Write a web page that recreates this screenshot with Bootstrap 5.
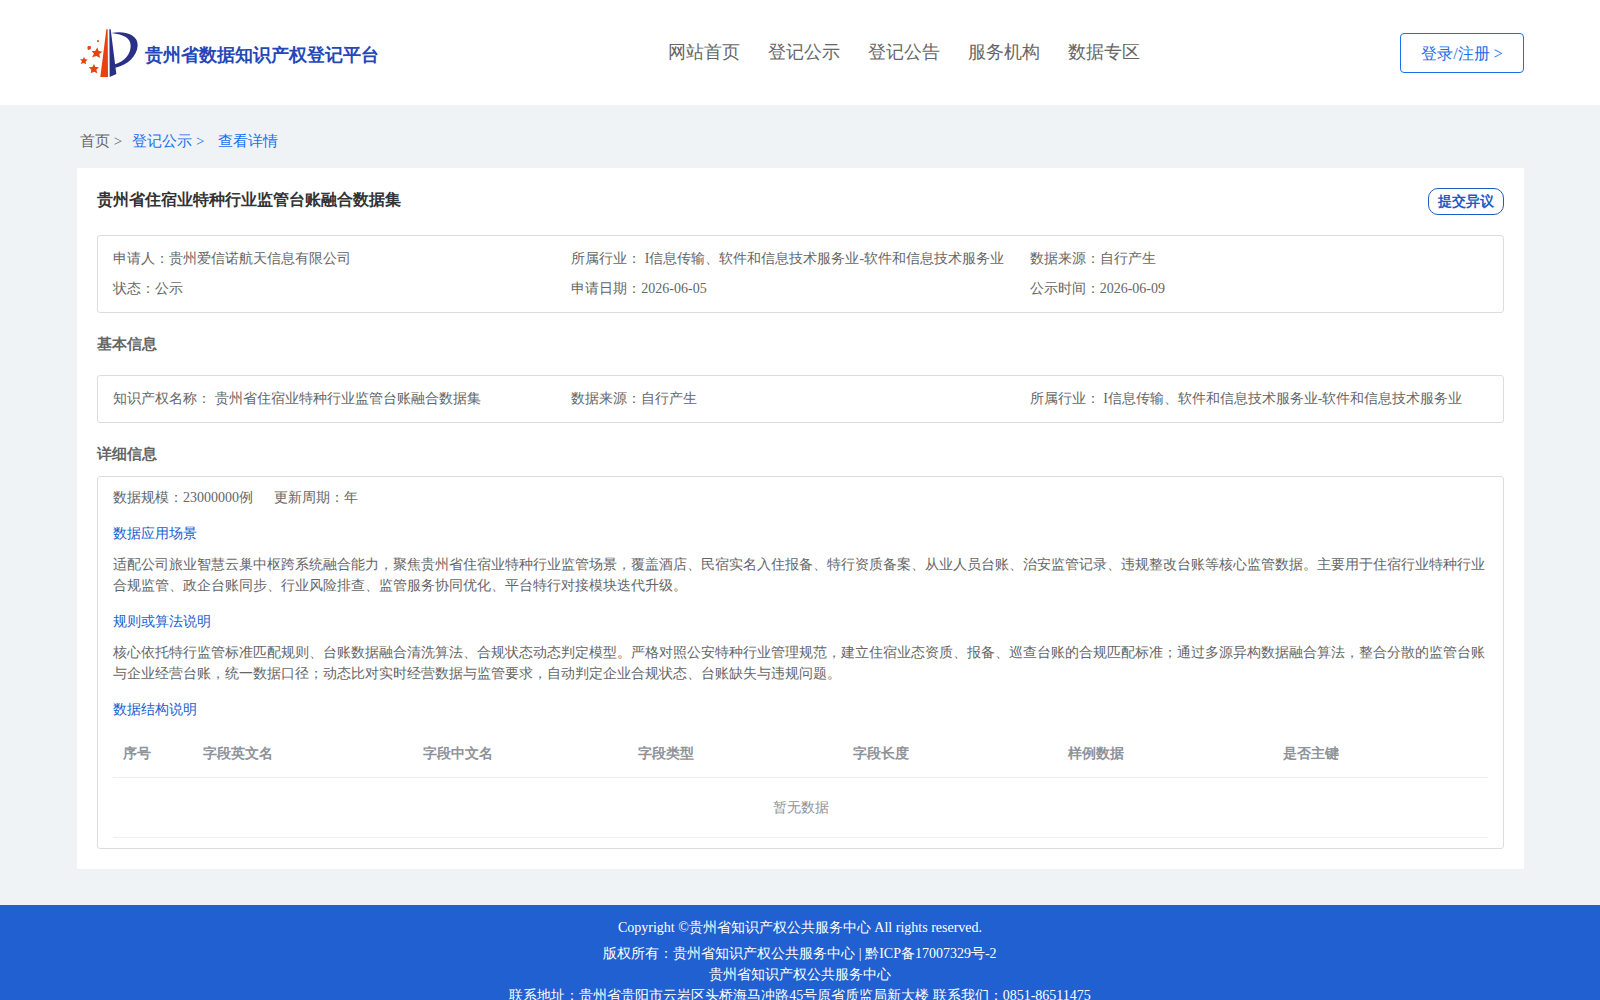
<!DOCTYPE html>
<html lang="en">
<head>
<meta charset="utf-8">
<meta name="viewport" content="width=device-width, initial-scale=1">
<title>贵州省数据知识产权登记平台</title>
<link href="https://cdn.jsdelivr.net/npm/bootstrap@5.3.0/dist/css/bootstrap.min.css" rel="stylesheet">
<style>
  body { font-family: "Liberation Serif", serif; font-size: 14px; line-height: 21px; color: #666; background: #eff3f6; }
  a { text-decoration: none; }
  .page-wrap { padding-left: 77px; padding-right: 76px; }
  .site-header { min-height: 105px; }
  .brand-link { color: #2547b8; font-size: 18px; line-height: 24px; font-weight: 700; padding-left: 3px; gap: 7px; }
  .brand-link svg { width: 58px; height: 50px; }
  .brand-link span { padding-top: 5px; }
  .main-menu { gap: 28px; padding-left: 28px; padding-bottom: 2px; font-size: 18px; line-height: 24px; }
  .main-menu a { color: #666; }
  .login-btn { width: 124px; height: 40px; padding: 2px 0 0; font-size: 16px; color: #1a6fee; border: 1px solid #1a6fee; border-radius: 4px; }
  .crumbs { padding: 25px 3px 16px; font-size: 15px; line-height: 22px; gap: 10px; }
  .crumbs a { color: #666; }
  .crumbs a.on { color: #1a6fee; }
  .panel { padding: 20px; }
  .panel-title { font-size: 16px; line-height: 24px; font-weight: 700; color: #333; }
  .object-btn { width: 76px; height: 27px; padding: 0; font-size: 14px; line-height: 21px; font-weight: 700; color: #1f5bc4; border: 1px solid #1f5bc4; border-radius: 10px; }
  .info-box { border: 1px solid #ddd; border-radius: 3px; padding: 8px 15px; }
  .info-box .cell { line-height: 30px; }
  .sec-title { font-size: 15px; line-height: 22px; font-weight: 700; color: #666; margin: 20px 0; }
  .sec-title.tight { margin-bottom: 11px; }
  .detail-box { padding: 10px 15px; }
  .scale-line { gap: 21px; }
  .sub-title { font-size: 14px; line-height: 21px; font-weight: 400; color: #2060d0; margin: 15px 0 10px; }
  .field-table { table-layout: fixed; width: 100%; color: #909399; }
  .field-table th { padding: 12px 10px; line-height: 23px; border-bottom: 1px solid #ebeef5; }
  .field-table td { height: 60px; text-align: center; border-bottom: 1px solid #ebeef5; }
  .c-no { width: 80px; } .c-en { width: 220px; }
  .site-footer { margin-top: 36px; padding: 12px 0 20px; background: #2060d0; color: #fff; }
  .site-footer a { color: #fff; }
  .copy-line { margin-bottom: 5px; }
</style>
<script src="https://cdn.jsdelivr.net/npm/bootstrap@5.3.0/dist/js/bootstrap.bundle.min.js"></script>
</head>
<body>
<header class="site-header page-wrap bg-white d-flex align-items-center justify-content-between">
  <a class="brand-link d-flex align-items-center" href="#">
    <svg viewBox="0 0 174 150" aria-hidden="true">
      <path fill="#e8420f" d="M79 4h4l1 143H61z"/>
      <path fill="#2b3087" d="M88 4h4l17 134-20 9zM94 15c46-8 80 8 79 37-1 32-30 59-66 67l-2-10c28-9 47-30 47-56 0-22-20-34-58-38z"/>
      <g fill="#e8420f">
        <path d="M52 58l4 11 11 2-9 7 2 12-10-6-14 4 6-11-7-8 11 0z"/>
        <path d="M42 108l4 9 11 1-8 7 3 11-10-5-10 5 2-11-8-7 11-1z"/>
        <path d="M12 86l3 7 8 2-6 5 1 9-7-4-9 3 4-8-6-6 9 0z"/>
        <path d="M24 54l9 1-1 9-8 2-2-7z"/><path d="M51 37l5-1 1 5-5 2z"/>
      </g>
    </svg>
    <span>贵州省数据知识产权登记平台</span>
  </a>
  <nav class="main-menu d-flex">
    <a href="#">网站首页</a><a href="#">登记公示</a><a href="#">登记公告</a><a href="#">服务机构</a><a href="#">数据专区</a>
  </nav>
  <button class="btn login-btn" type="button">登录/注册 &gt;</button>
</header>
<main class="page-wrap">
  <nav class="crumbs d-flex" aria-label="面包屑">
    <a href="#">首页 &gt;</a><a class="on" href="#">登记公示 &gt;</a><a class="on" href="#">&nbsp;查看详情</a>
  </nav>
  <section class="panel bg-white">
    <div class="d-flex justify-content-between align-items-start mb-3 pb-1">
      <h1 class="panel-title m-0">贵州省住宿业特种行业监管台账融合数据集</h1>
      <button class="btn object-btn" type="button">提交异议</button>
    </div>
    <div class="info-box">
      <div class="row g-0">
        <div class="col-4 cell">申请人：贵州爱信诺航天信息有限公司</div>
        <div class="col-4 cell">所属行业： I信息传输、软件和信息技术服务业-软件和信息技术服务业</div>
        <div class="col-4 cell">数据来源：自行产生</div>
        <div class="col-4 cell">状态：公示</div>
        <div class="col-4 cell">申请日期：2026-06-05</div>
        <div class="col-4 cell">公示时间：2026-06-09</div>
      </div>
    </div>
    <h2 class="sec-title">基本信息</h2>
    <div class="info-box">
      <div class="row g-0">
        <div class="col-4 cell">知识产权名称： 贵州省住宿业特种行业监管台账融合数据集</div>
        <div class="col-4 cell">数据来源：自行产生</div>
        <div class="col-4 cell">所属行业： I信息传输、软件和信息技术服务业-软件和信息技术服务业</div>
      </div>
    </div>
    <h2 class="sec-title tight">详细信息</h2>
    <div class="info-box detail-box">
      <div class="scale-line d-flex"><span>数据规模：23000000例</span><span>更新周期：年</span></div>
      <h3 class="sub-title">数据应用场景</h3>
      <p class="m-0">适配公司旅业智慧云巢中枢跨系统融合能力，聚焦贵州省住宿业特种行业监管场景，覆盖酒店、民宿实名入住报备、特行资质备案、从业人员台账、治安监管记录、违规整改台账等核心监管数据。主要用于住宿行业特种行业合规监管、政企台账同步、行业风险排查、监管服务协同优化、平台特行对接模块迭代升级。</p>
      <h3 class="sub-title">规则或算法说明</h3>
      <p class="m-0">核心依托特行监管标准匹配规则、台账数据融合清洗算法、合规状态动态判定模型。严格对照公安特种行业管理规范，建立住宿业态资质、报备、巡查台账的合规匹配标准；通过多源异构数据融合算法，整合分散的监管台账与企业经营台账，统一数据口径；动态比对实时经营数据与监管要求，自动判定企业合规状态、台账缺失与违规问题。</p>
      <h3 class="sub-title">数据结构说明</h3>
      <table class="field-table">
        <thead>
          <tr><th class="c-no">序号</th><th class="c-en">字段英文名</th><th>字段中文名</th><th>字段类型</th><th>字段长度</th><th>样例数据</th><th>是否主键</th></tr>
        </thead>
        <tbody><tr><td colspan="7">暂无数据</td></tr></tbody>
      </table>
    </div>
  </section>
</main>
<footer class="site-footer text-center">
  <div class="copy-line">Copyright ©贵州省知识产权公共服务中心 All rights reserved.</div>
  <div>版权所有：贵州省知识产权公共服务中心 | <a href="#">黔ICP备17007329号-2</a></div>
  <div>贵州省知识产权公共服务中心</div>
  <div>联系地址：贵州省贵阳市云岩区头桥海马冲路45号原省质监局新大楼 联系我们：0851-86511475</div>
</footer>
</body>
</html>
